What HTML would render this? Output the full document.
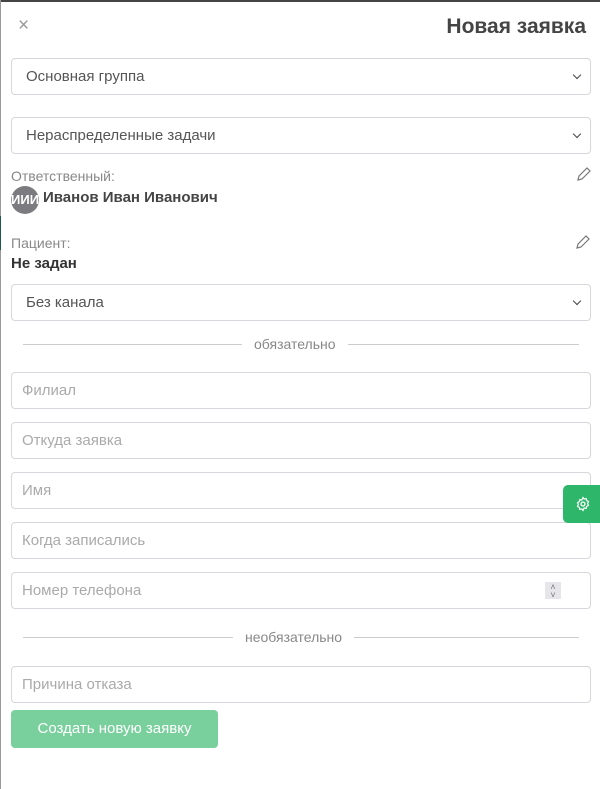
<!DOCTYPE html>
<html><head><meta charset="utf-8"><style>
*{box-sizing:border-box;margin:0;padding:0}
body{width:600px;height:789px;background:#fff;font-family:"Liberation Sans",sans-serif;position:relative;overflow:hidden;color:#333}
.abs{position:absolute}
.box{position:absolute;left:11px;width:580px;height:37px;border:1px solid #d6d6dc;border-radius:4px;font-size:15px;padding-left:14px;line-height:36px;color:#555}
.inp{padding-left:10px;color:#aaa}
.chev{position:absolute;right:10px;top:13px;width:6px;height:6px;border-right:1.3px solid #444;border-bottom:1.3px solid #444;transform:rotate(45deg)}
.lbl{position:absolute;left:11px;font-size:14px;color:#888}
.div{position:absolute;left:23px;width:556px;height:1px;background:#ccc}
.dt{position:absolute;background:#fff;padding:0 12px;font-size:14px;color:#888;top:-9px;line-height:18px}
</style></head><body>
<div class="abs" style="left:0;top:0;width:600px;height:2px;background:#444"></div>
<div class="abs" style="left:0;top:0;width:1px;height:789px;background:#999"></div>
<div class="abs" style="left:0;top:216px;width:1px;height:34px;background:#1d5a48"></div>
<div class="abs" style="left:18px;top:15px;font-size:19px;color:#999;line-height:22px">×</div>
<div class="abs" style="right:14px;top:15px;font-size:21px;font-weight:bold;color:#444">Новая заявка</div>
<div class="box" style="top:58px">Основная группа<span class="chev"></span></div>
<div class="box" style="top:117px">Нераспределенные задачи<span class="chev"></span></div>
<div class="lbl" style="top:168px">Ответственный:</div>
<svg class="abs" style="left:576px;top:166px" width="16" height="16" viewBox="0 0 16 16"><path d="M2 14l1-4L11 2l3 3-8 8z" fill="none" stroke="#777" stroke-width="1.2"/></svg>
<div class="abs" style="left:11px;top:186px;width:28px;height:28px;border-radius:50%;background:#7c7c80;color:#fff;font-size:13px;font-weight:bold;line-height:28px;text-align:center;overflow:hidden">ИИИ</div>
<div class="abs" style="left:43px;top:189px;font-size:15px;font-weight:bold;color:#444">Иванов Иван Иванович</div>
<div class="lbl" style="top:235px">Пациент:</div>
<svg class="abs" style="left:575px;top:234px" width="16" height="16" viewBox="0 0 16 16"><path d="M2 14l1-4L11 2l3 3-8 8z" fill="none" stroke="#777" stroke-width="1.2"/></svg>
<div class="abs" style="left:11px;top:255px;font-size:15px;font-weight:bold;color:#333">Не задан</div>
<div class="box" style="top:284px">Без канала<span class="chev"></span></div>
<div class="div" style="top:344px"><span class="dt" style="left:219px">обязательно</span></div>
<div class="box inp" style="top:372px">Филиал</div>
<div class="box inp" style="top:422px">Откуда заявка</div>
<div class="box inp" style="top:472px">Имя</div>
<div class="box inp" style="top:522px">Когда записались</div>
<div class="box inp" style="top:572px">Номер телефона<span class="abs" style="left:533px;top:9px;width:16px;height:17px;background:#e6e6ea;color:#777;font-size:9px;line-height:8px;text-align:center;padding-top:1px">˄<br>˅</span></div>
<div class="div" style="top:637px"><span class="dt" style="left:210px">необязательно</span></div>
<div class="box inp" style="top:666px">Причина отказа</div>
<div class="abs" style="left:11px;top:710px;width:207px;height:38px;background:#79d09d;border-radius:4px;color:#fff;font-size:15px;line-height:38px;text-align:center">Создать новую заявку</div>
<div class="abs" style="left:563px;top:485px;width:37px;height:38px;background:#2eb66a;border-radius:5px 0 0 5px"></div>
<svg class="abs" style="left:575px;top:496px" width="16" height="16" viewBox="0 0 16 16"><circle cx="8" cy="8" r="2" fill="none" stroke="#fff" stroke-width="1.3"/><path d="M8 1.5l1.2 1.6 2-.5.5 2 1.8 1-.9 1.9.9 1.9-1.8 1-.5 2-2-.5L8 14.5l-1.2-1.6-2 .5-.5-2-1.8-1 .9-1.9-.9-1.9 1.8-1 .5-2 2 .5z" fill="none" stroke="#fff" stroke-width="1.2"/></svg>
</body></html>
